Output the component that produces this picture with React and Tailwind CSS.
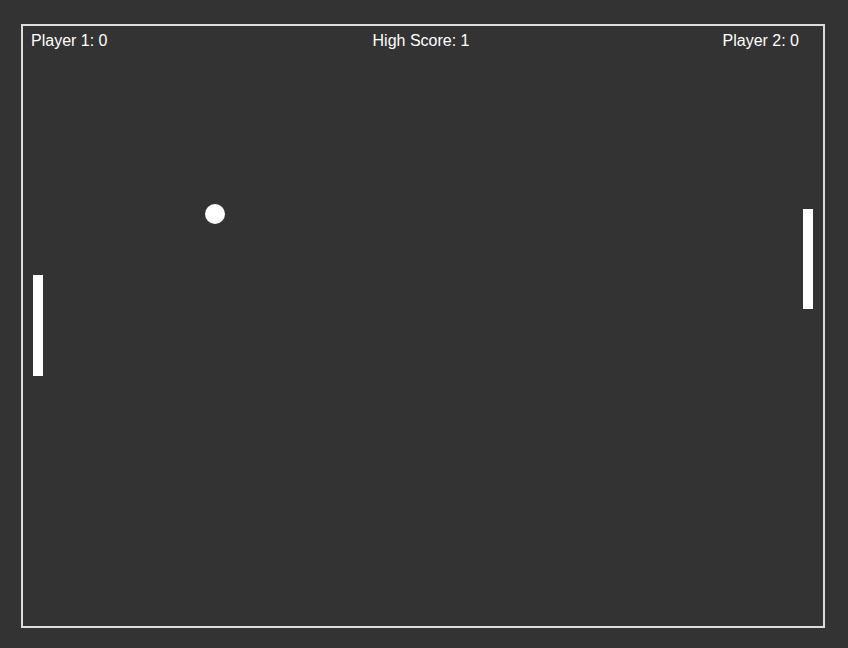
export default function App() {
    return (
        <div className="min-h-[648px] w-full bg-[#333333] pt-[24px] pl-[21px]" style={{ fontFamily: '"Liberation Sans", Arial, sans-serif' }}>
            <div className="relative w-[804px] h-[604px] border-2 border-[#dddddd]">
                <div className="flex items-start text-white text-base leading-[18px] pt-[6px] pl-[8px] pr-[24px]">
                    <span>Player 1: 0</span>
                    <span className="flex-1 text-center pl-[12px]">High Score: 1</span>
                    <span>Player 2: 0</span>
                </div>

                {/* game objects on the canvas */}
                <div className="absolute left-[10px] top-[249px] w-[10px] h-[101px] bg-white" />
                <div className="absolute left-[780px] top-[183px] w-[10px] h-[100px] bg-white" />
                <div className="absolute left-[182px] top-[178px] w-[20px] h-[20px] rounded-full bg-white" />
            </div>
        </div>
    );
}
